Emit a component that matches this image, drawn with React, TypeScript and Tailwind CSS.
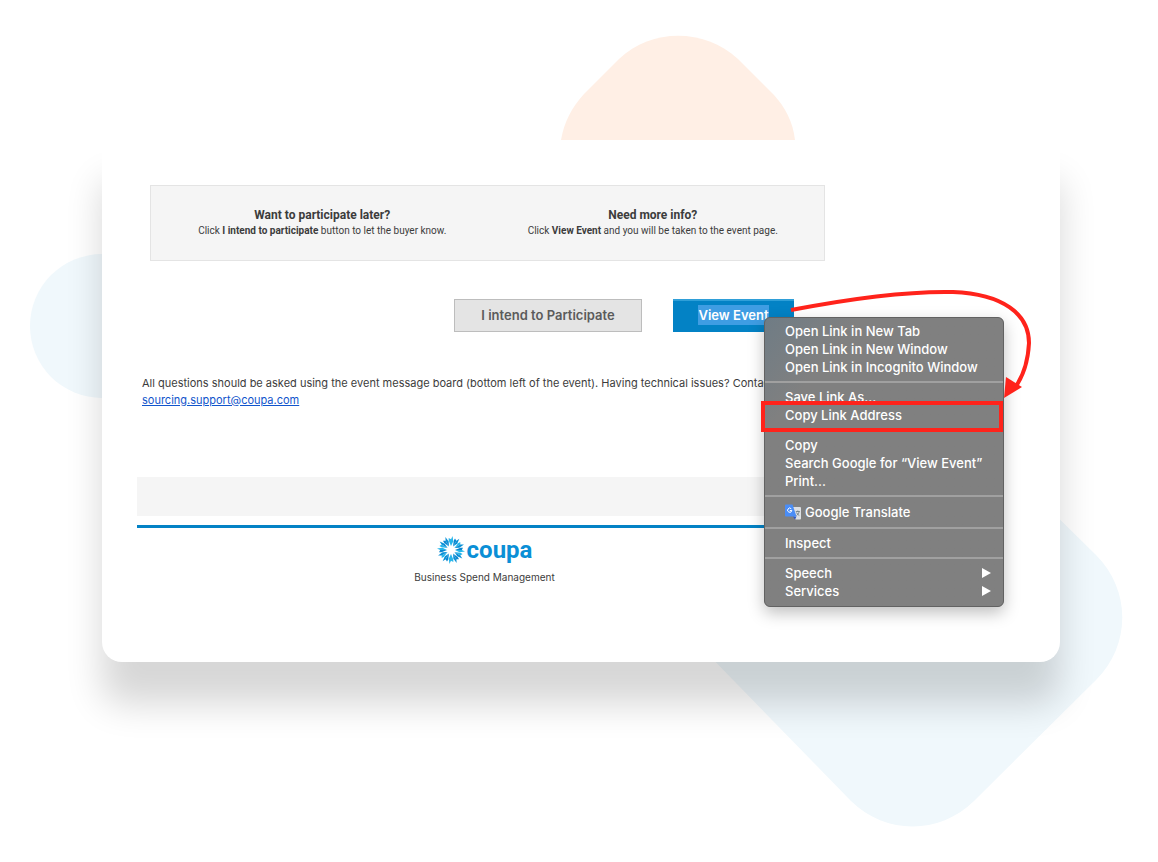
import React, { FC } from "react"

interface MenuItem {
    label: string
    submenu?: boolean
    icon?: boolean
}

const menuGroups: MenuItem[][] = [
    [
        { label: "Open Link in New Tab" },
        { label: "Open Link in New Window" },
        { label: "Open Link in Incognito Window" },
    ],
    [{ label: "Save Link As..." }, { label: "Copy Link Address" }],
    [{ label: "Copy" }, { label: "Search Google for “View Event”" }, { label: "Print..." }],
    [{ label: "Google Translate", icon: true }],
    [{ label: "Inspect" }],
    [
        { label: "Speech", submenu: true },
        { label: "Services", submenu: true },
    ],
]

const IconTranslate: FC = () => (
    <svg className="my-0.5" width="16" height="16" viewBox="0 0 16 16" aria-hidden="true">
        <path d="M6 3h9a1 1 0 0 1 1 1v10.500a1 1 0 0 1-1 1h-4.500z" fill="#dcdfe3" />
        <path d="M8 12.500h3.500l-1.500 3z" fill="#2a56c6" />
        <path d="M1 .5h6.500l4 12H1a1 1 0 0 1-1-1v-10a1 1 0 0 1 1-1z" fill="#4a8df6" />
        <path d="M6.300 4.800A2.100 2.100 0 1 0 6.800 6.500H4.800" fill="none" stroke="#fff" strokeWidth="1" />
        <path d="M10.800 7.500h4M12.800 6.500v1M14.200 7.500c-.4 1.800-1.500 3.200-2.700 4M11.500 8.500c.5 1.400 1.600 2.400 2.800 3" fill="none" stroke="#67777f" strokeWidth=".8" />
    </svg>
)

const ContextMenu: FC = () => (
    <div
        role="menu"
        className="absolute left-[91px] top-[18px] w-[240px] rounded-md border border-[#626262] bg-[#808080] bg-linear-to-br from-[#6f7c85] to-[#808080] to-20% pt-1 pb-1.5 font-['Inter',sans-serif] text-[13px] leading-[18px] font-medium text-white shadow-[0_6px_16px_rgba(0,0,0,0.25)]"
    >
        {menuGroups.map((group, i) => (
            <div key={i} role="group">
                {i > 0 && <hr className="my-[5px] border-t-2 border-[#a0a0a0]" />}
                {group.map((item) => (
                    <button
                        key={item.label}
                        role="menuitem"
                        className="flex w-full items-center gap-1 pr-3 pl-5 text-left whitespace-nowrap"
                    >
                        {item.icon && <IconTranslate />}
                        {item.label}
                        {item.submenu && (
                            <svg className="ml-auto" width="9" height="10" viewBox="0 0 9 10" aria-hidden="true">
                                <path d="M0 0L9 5L0 10z" fill="#fff" />
                            </svg>
                        )}
                    </button>
                ))}
            </div>
        ))}
        <div className="absolute top-[83px] -left-1 h-[31px] w-[242px] border-4 border-[#ff231b]" />
    </div>
)

const Arrow: FC = () => (
    <svg
        className="pointer-events-none absolute -top-3 left-[115px] h-[120px] w-[245px]"
        viewBox="0 0 245 120"
        aria-hidden="true"
    >
        <path
            d="M3 23C60 12 120 4 165 5C215 7 241 27 241 56C240 76 235 90 226 102"
            fill="none"
            stroke="#ff231b"
            strokeWidth="4"
        />
        <path d="M218 90L234 100L216 111z" fill="#ff231b" />
    </svg>
)

const petals = [0, 30, 60, 90, 120, 150, 180, 210, 240, 270, 300, 330]

const Logo: FC = () => (
    <div className="flex items-center justify-center gap-0.5">
        <svg width="28" height="28" viewBox="-14 -14 28 28" aria-hidden="true">
            {petals.map((angle, i) => (
                <g key={angle} transform={`rotate(${angle})`}>
                    <path d="M0 -4L-2.300 -9.500L-2.300 -12L0 -10.800z" fill={i % 2 ? "#0a86cf" : "#25b5ea"} />
                    <path d="M0 -4L2.200 -8.500L1.600 -14L0 -10.800z" fill={i % 3 ? "#0a8fd6" : "#25b5ea"} />
                </g>
            ))}
        </svg>
        <span className="font-['Roboto',sans-serif] text-2xl leading-7 font-bold text-[#0a8fd6]">coupa</span>
    </div>
)

const Backdrop: FC = () => (
    <svg className="absolute inset-0 -z-10 h-full w-full" aria-hidden="true">
        <path
            d="M561 140C564 122 572 107 584 94L619 59C652 28 704 28 738 59L774 95C785 107 793 122 795 140z"
            fill="#ffefe5"
        />
        <circle cx="102" cy="326" r="72" fill="#f0f8fc" />
        <path
            d="M1030 490L1096 555C1131 590 1131 645 1096 680L974 801C939 835 886 835 851 801L700 646z"
            fill="#f0f8fc"
        />
    </svg>
)

const App: FC = () => {
    return (
        <div className="relative isolate min-h-screen overflow-hidden bg-white pt-[140px] pr-[98px] pb-[200px] pl-[102px] font-['Inter','Liberation_Sans',sans-serif] text-[#3c3c3c]">
            <Backdrop />
            <main className="rounded-b-[20px] bg-white px-[35px] pt-[45px] pb-[76px] shadow-[0_42px_36px_rgba(0,0,0,0.16)]">
                <div className="max-w-[695px]">
                    <section className="mr-[7px] ml-[13px] grid grid-cols-2 border border-[#e4e4e4] bg-[#f5f5f5] px-1.5 py-[21px] text-center font-['Roboto',sans-serif]">
                        <div>
                            <h2 className="text-xs leading-4 font-bold">Want to participate later?</h2>
                            <p className="text-[10px] leading-4">
                                Click <b>I intend to participate</b> button to let the buyer know.
                            </p>
                        </div>
                        <div>
                            <h2 className="text-xs leading-4 font-bold">Need more info?</h2>
                            <p className="text-[10px] leading-4">
                                Click <b>View Event</b> and you will be taken to the event page.
                            </p>
                        </div>
                    </section>

                    <div className="mt-[38px] mr-[38px] flex justify-end gap-[31px] text-[13px] font-semibold">
                        <button className="h-[33px] w-[188px] border border-[#bdbdbd] bg-[#e4e4e4] text-[#5b5b5b]">
                            I intend to Participate
                        </button>
                        <div className="relative z-10">
                            <button className="h-[33px] w-[121px] border-t-2 border-[#2f9fd8] bg-[#0382c5] pb-0.5 text-white">
                                <span className="bg-[#3f9de3] py-0.5">View Event</span>
                            </button>
                            <ContextMenu />
                            <Arrow />
                        </div>
                    </div>

                    <p className="mt-[43px] ml-[5px] text-[11px] leading-[17px]">
                        All questions should be asked using the event message board (bottom left of the event). Having technical issues? Contact
                        <br />
                        <a href="mailto:sourcing.support@coupa.com" className="text-[#1155cc] underline">
                            sourcing.support@coupa.com
                        </a>
                    </p>

                    <footer className="mt-[68px] text-center">
                        <div className="h-[39px] bg-[#f5f5f5]" />
                        <div className="mt-[9px] border-t-3 border-[#0382c5] pt-2">
                            <Logo />
                            <p className="mt-1 text-[10px] leading-[18px]">Business Spend Management</p>
                        </div>
                    </footer>
                </div>
            </main>
        </div>
    )
}

export default App
